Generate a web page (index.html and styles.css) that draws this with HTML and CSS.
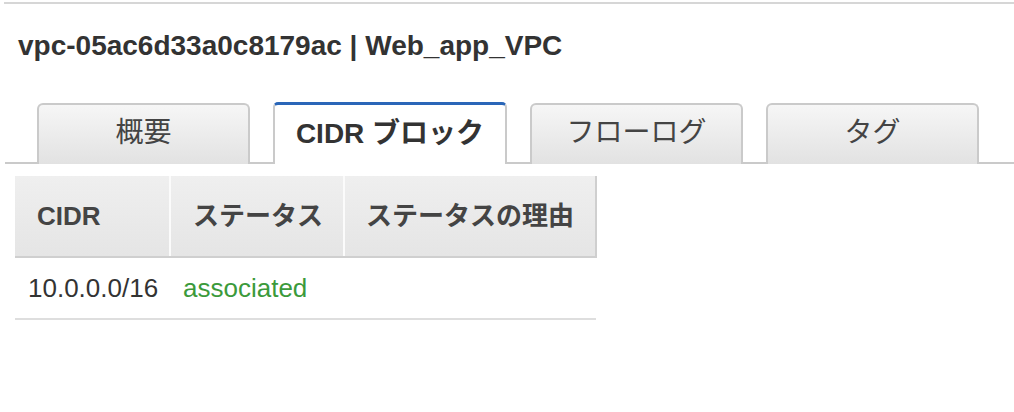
FILE: index.html
```html
<!DOCTYPE html>
<html lang="ja">
<head>
    <meta charset="UTF-8">
    <meta name="viewport" content="width=device-width, initial-scale=1.0">
    <title>vpc-05ac6d33a0c8179ac | Web_app_VPC</title>
    <link rel="stylesheet" href="styles.css">
</head>
<body>
    <div class="panel">
        <h2 class="title">vpc-05ac6d33a0c8179ac | Web_app_VPC</h2>
        <div class="tabs">
            <div class="tab tab-first">概要</div>
            <div class="tab tab-active">CIDR ブロック</div>
            <div class="tab">フローログ</div>
            <div class="tab">タグ</div>
        </div>
        <table class="cidr-table">
            <thead>
                <tr>
                    <th class="col-cidr">CIDR</th>
                    <th class="col-status">ステータス</th>
                    <th class="col-reason">ステータスの理由</th>
                </tr>
            </thead>
            <tbody>
                <tr>
                    <td>10.0.0.0/16</td>
                    <td class="status-ok">associated</td>
                    <td></td>
                </tr>
            </tbody>
        </table>
    </div>
</body>
</html>
```

FILE: styles.css
```css
body {
    margin: 0;
    background-color: #fff;
    font-family: "Liberation Sans", "Noto Sans CJK JP", sans-serif;
    color: #333;
}
.panel {
    margin-top: 2px;
    margin-left: 4px;
    border-top: 2px solid #d6d6d6;
}
.title {
    margin: 25px 0 0 14px;
    font-size: 28px;
    line-height: 34px;
    font-weight: bold;
    color: #333;
}
.tabs {
    display: flex;
    align-items: flex-end;
    gap: 23px;
    margin-top: 39px;
    margin-left: 1px;
    padding-left: 32px;
    border-bottom: 2px solid #cacaca;
    height: 60px;
}
.tab {
    box-sizing: border-box;
    width: 213px;
    height: 61px;
    margin-bottom: -2px;
    border: 2px solid #cacaca;
    border-bottom: none;
    border-radius: 6px 6px 0 0;
    background: linear-gradient(#f6f6f6, #e2e2e2);
    color: #444;
    font-size: 28px;
    line-height: 56px;
    text-align: center;
}
.tab-active {
    width: 234px;
    height: 62px;
    border-top: 3px solid #2a66b8;
    border-radius: 5px 5px 0 0;
    background: #fff;
    color: #333;
    font-weight: bold;
    line-height: 58px;
}
.cidr-table {
    margin: 12px 0 0 11px;
    border-collapse: collapse;
    font-size: 26px;
    line-height: 30px;
}
.cidr-table th {
    box-sizing: border-box;
    height: 81px;
    padding: 0 0 0 22px;
    background: linear-gradient(#efefef, #e5e5e5);
    border-left: 2px solid #fbfbfb;
    border-right: 1px solid #d2d2d2;
    border-bottom: 2px solid #cfcfcf;
    color: #444;
    font-weight: bold;
    text-align: left;
    vertical-align: middle;
}
.cidr-table th.col-cidr {
    width: 155px;
    border-left: none;
}
.cidr-table th.col-status {
    width: 174px;
}
.cidr-table th.col-reason {
    width: 252px;
    padding-left: 21px;
    border-right: 2px solid #cfcfcf;
}
.cidr-table td {
    height: 60px;
    padding: 0 0 0 13px;
    border-bottom: 2px solid #dedede;
    color: #333;
    vertical-align: middle;
}
.cidr-table td.status-ok {
    color: #3b9a3b;
}
```
